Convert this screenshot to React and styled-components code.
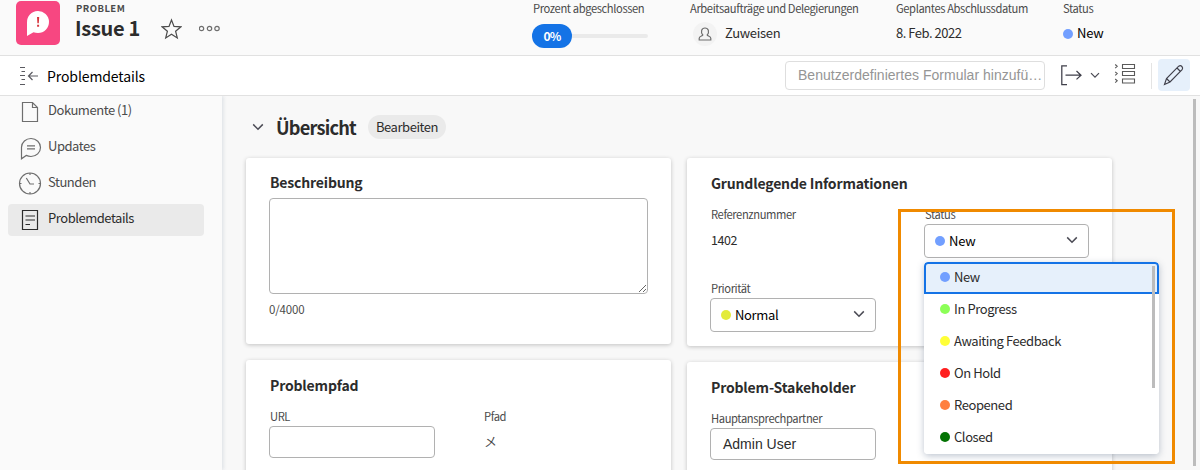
import React from "react";
import styled, { createGlobalStyle } from "styled-components";

const GlobalStyle = createGlobalStyle`
  * { box-sizing: border-box; }
  body {
    margin: 0;
    width: 1200px;
    height: 470px;
    overflow: hidden;
    background: #f8f8f8;
    font-family: "Noto Sans CJK SC", "Noto Sans", sans-serif;
    font-size: 13px;
    color: #2c2c2c;
  }
`;

const Page = styled.div`
  position: relative;
  display: flex;
  flex-direction: column;
  width: 1200px;
  height: 470px;
  overflow: hidden;
`;

const Text = styled.span`
  display: block;
  white-space: nowrap;
  font-size: ${(p) => p.$size || 13}px;
  line-height: ${(p) => p.$line || 20}px;
  font-weight: ${(p) => p.$weight || 400};
  letter-spacing: ${(p) => p.$track || 0}px;
  color: ${(p) => p.$color || "#2c2c2c"};
`;

const Label = styled(Text)`
  font-size: 11.2px;
  line-height: 16px;
  letter-spacing: -0.4px;
  color: #4b4b4b;
`;

const Counter = styled(Text)`
  margin-left: -1px;
  font-size: 11.5px;
  line-height: 16px;
  letter-spacing: -0.15px;
  color: #4b4b4b;
`;

const CardTitle = styled.h3`
  margin: 0;
  font-size: 14px;
  line-height: 20px;
  font-weight: 700;
  letter-spacing: -0.17px;
  color: #2c2c2c;
`;

const Dot = styled.span`
  flex: none;
  width: 10px;
  height: 10px;
  border-radius: 50%;
  background: ${(p) => p.$color};
`;

const Icon = styled.svg`
  display: block;
  flex: none;
  fill: none;
  stroke: ${(p) => p.$color || "#6e6e6e"};
  stroke-width: ${(p) => p.$stroke || 1.2};
`;

/* Header */
const Header = styled.header`
  display: flex;
  flex: none;
  height: 56px;
  padding-left: 16px;
  background: #fafafa;
  border-bottom: 1px solid #e1e1e1;
`;

const ProblemBadge = styled.div`
  flex: none;
  width: 44px;
  height: 44px;
  margin-top: 1px;
  border-radius: 5px;
  background: #f74781;
`;

const TitleBlock = styled.div`
  flex: none;
  width: 101px;
  padding: 2px 0 0 16px;
`;

const IssueTitle = styled.h1`
  margin: 0 0 0 -1px;
  font-size: 20px;
  line-height: 28px;
  font-weight: 700;
  letter-spacing: -0.3px;
`;

const HeaderActions = styled.div`
  display: flex;
  flex: none;
  gap: 17px;
  width: 372px;
  padding-top: 18px;
`;

const Metric = styled.div`
  flex: none;
  width: ${(p) => p.$width}px;
`;

const MetricValue = styled.div`
  display: flex;
  align-items: center;
  gap: ${(p) => p.$gap || 0}px;
  height: 24px;
  margin-top: 6px;
  > ${Text} { margin-top: -3px; }
`;

const Progress = styled.div`
  display: flex;
  align-items: center;
  width: 116px;
  height: 24px;
  margin: 8px 0 0 -1px;
`;

const ProgressPill = styled.div`
  display: flex;
  align-items: center;
  justify-content: center;
  width: 40px;
  height: 24px;
  border-radius: 12px;
  background: #1473e6;
`;

const ProgressTrack = styled.div`
  flex: 1;
  height: 4px;
  border-radius: 0 2px 2px 0;
  background: #eaeaea;
`;

const Avatar = styled.div`
  display: flex;
  align-items: center;
  justify-content: center;
  width: 24px;
  height: 24px;
  margin-left: 3px;
  border-radius: 50%;
  background: #f3f3f3;
`;

/* Toolbar */
const Toolbar = styled.div`
  display: flex;
  flex: none;
  align-items: center;
  height: 40px;
  padding: 0 10px 0 19px;
  background: #fff;
  border-bottom: 1px solid #e1e1e1;
`;

const ToolbarTitle = styled.div`
  flex: 1;
  padding-left: 9px;
`;

const FormSearch = styled.div`
  width: 260px;
  height: 29px;
  margin-right: 15px;
  padding-left: 12px;
  border: 1px solid #dedede;
  border-radius: 4px;
  font: 14px/27px "Liberation Sans", Arial, sans-serif;
  letter-spacing: 0.02px;
  color: #959595;
  white-space: nowrap;
`;

const ExportMenu = styled.div`
  display: flex;
  align-items: center;
  gap: 6px;
  width: 54px;
`;

const Divider = styled.div`
  width: 1px;
  height: 26px;
  margin: 0 6px 0 15px;
  background: #e4e4e4;
`;

const EditButton = styled.div`
  display: flex;
  align-items: center;
  justify-content: center;
  width: 32px;
  height: 32px;
  margin-top: -1px;
  border-radius: 4px;
  background: #e6f0fb;
`;

/* Body */
const Body = styled.div`
  display: flex;
  flex: 1;
  min-height: 0;
`;

const Sidebar = styled.nav`
  display: flex;
  flex: none;
  flex-direction: column;
  gap: 4px;
  width: 222px;
  padding-left: 8px;
  background: #fafafa;
  box-shadow: 1px 0 4px rgba(100, 125, 145, 0.22);
  clip-path: inset(0 -8px 0 0);
`;

const NavItem = styled.div`
  display: flex;
  flex: none;
  gap: 5px;
  width: 196px;
  height: 32px;
  padding: 4px 0 0 9px;
  border-radius: 4px;
  background: ${(p) => (p.$active ? "#eaeaea" : "transparent")};
  svg { margin-top: -1px; }
`;

const Main = styled.main`
  flex: 1;
  min-width: 0;
  padding: 19px 0 0 24px;
  overflow: hidden;
`;

const SectionHeader = styled.div`
  display: flex;
  align-items: center;
  height: 24px;
  padding-left: 6px;
`;

const SectionTitle = styled.h2`
  width: 92px;
  margin: 0;
  padding-left: 12px;
  font-size: 18.2px;
  line-height: 24px;
  font-weight: 700;
  letter-spacing: -0.8px;
  white-space: nowrap;
`;

const EditChip = styled.div`
  display: flex;
  align-items: center;
  justify-content: center;
  width: 78px;
  height: 24px;
  margin-left: 12px;
  border-radius: 12px;
  background: #eaeaea;
`;

const Columns = styled.div`
  display: flex;
  gap: 16px;
  margin-top: 19px;
`;

const Column = styled.div`
  display: flex;
  flex-direction: column;
  gap: 16px;
  width: 425px;
`;

const Card = styled.section`
  height: ${(p) => p.$height}px;
  padding: ${(p) => p.$top}px 24px 0;
  border-radius: 3px;
  background: #fff;
  box-shadow: 0 1px 4px rgba(0, 0, 0, 0.22);
`;

const Description = styled.textarea`
  display: block;
  width: 379px;
  height: 96px;
  margin: 6px 0 7px -1px;
  border: 1px solid #b1b1b1;
  border-radius: 4px;
  background: #fff;
`;

const FieldGrid = styled.div`
  display: grid;
  grid-template-columns: 214px 165px;
  margin-top: 13px;
`;

const Field = styled.div`
  height: 74px;
`;

const Reference = styled(Text)`
  margin-top: 8px;
`;

const Box = styled.div`
  display: flex;
  align-items: center;
  gap: 4px;
  width: ${(p) => p.$width || 166}px;
  height: ${(p) => p.$height || 34}px;
  margin: 2px 0 0 -1px;
  padding: 0 10px;
  border: 1px solid #b1b1b1;
  border-radius: 4px;
  background: #fff;
  svg { margin: 0 0 2px auto; }
`;

const UserName = styled.span`
  padding-left: 2px;
  font: 14px/20px "Liberation Sans", Arial, sans-serif;
`;

const PathValue = styled(Text)`
  margin-top: 7px;
  font-family: "Noto Sans CJK JP", sans-serif;
  color: #4b4b4b;
`;

/* Overlays */
const Menu = styled.div`
  position: absolute;
  left: 924px;
  top: 262px;
  width: 235px;
  height: 192px;
  border-radius: 4px;
  overflow: hidden;
  background: #fff;
  box-shadow: 0 2px 7px rgba(70, 90, 120, 0.35);
`;

const MenuItem = styled.div`
  display: flex;
  align-items: center;
  gap: 4px;
  height: 32px;
  padding: 0 14px;
  border: 2px solid ${(p) => (p.$active ? "#1473e6" : "transparent")};
  border-radius: ${(p) => (p.$active ? "4px 4px 0 0" : 0)};
  background: ${(p) => (p.$active ? "#e6f0fb" : "#fff")};
  ${Dot} { margin-top: -2px; }
  ${Text} { margin-top: -2px; }
`;

const MenuThumb = styled.div`
  position: absolute;
  right: 4px;
  top: 4px;
  width: 3px;
  height: 122px;
  background: #bcbcbc;
`;

const PageThumb = styled.div`
  position: absolute;
  left: 1193px;
  top: 99px;
  width: 3px;
  height: 367px;
  background: #bcbcbc;
`;

const Highlight = styled.div`
  position: absolute;
  left: 898px;
  top: 209px;
  width: 277px;
  height: 255px;
  border: 3px solid #f08a00;
  pointer-events: none;
`;

const Chevron = ({ size = 12 }) => (
  <Icon width={size} height={(size * 2) / 3} viewBox="0 0 12 8" $color="#4b4b55" $stroke={1.5}>
    <path d="M1.2 1.4 6 6.2l4.8-4.8" />
  </Icon>
);

const navIcons = {
  doc: <path d="M6 3.5h9.5l5 5V22.5H5.5V3.500zM15.5 3.5V8.5H20.5" />,
  chat: <path d="M4.5 23.800V12.300a9.5 9 0 1 1 9.5 9.200c-1.8 0-3.4-.4-4.8-1.100zM10 10.800h8M10 13.800h8" />,
  clock: (
    <>
      <circle cx="13" cy="12.5" r="10.5" />
      <path d="M9.3 7 13 13h4M13 2v2M13 21v2M2.5 12.5h2M21.5 12.5h2" />
    </>
  ),
  details: <path d="M5.5 3.5h15v19h-15zM8.5 9h9.5M8.5 13h9.5M8.5 17.5h4.5" />,
};

const navItems = [
  { icon: "doc", label: "Dokumente (1)" },
  { icon: "chat", label: "Updates" },
  { icon: "clock", label: "Stunden" },
  { icon: "details", label: "Problemdetails", active: true },
];

const statuses = [
  { label: "New", color: "#729fff", active: true },
  { label: "In Progress", color: "#8cff57" },
  { label: "Awaiting Feedback", color: "#ffff38" },
  { label: "On Hold", color: "#ff1f1f" },
  { label: "Reopened", color: "#ff7f3f" },
  { label: "Closed", color: "#037303" },
];

export default function App() {
  return (
    <Page>
      <GlobalStyle />
      <Header>
        <ProblemBadge>
          <svg width="44" height="44" viewBox="0 0 44 44">
            <path d="M11 35V21.5A11 11 0 1 1 22 32q-2.5 0-4.5-.8z" fill="#fff" />
            <path d="M21 16h2.200l-.4 6.200h-1.400zM21.100 23.800h2v1.900h-2z" fill="#d7373f" />
          </svg>
        </ProblemBadge>
        <TitleBlock>
          <Text $size={9.5} $line={12} $weight={700} $track={0.45} $color="#4b4b4b">PROBLEM</Text>
          <IssueTitle>Issue 1</IssueTitle>
        </TitleBlock>
        <HeaderActions>
          <Icon width="21" height="22" viewBox="0 0 21 22" $color="#4b4b4b">
            <path d="m10.500 2 2.500 6.400 6.900.4-5.300 4.400 1.700 6.700-5.800-3.700-5.800 3.700 1.700-6.700L1.100 8.800 8 8.400z" />
          </Icon>
          <Icon width="22" height="22" viewBox="0 0 22 22">
            <circle cx="2.5" cy="10.5" r="2.2" />
            <circle cx="10.5" cy="10.5" r="2.2" />
            <circle cx="18" cy="10.5" r="2.2" />
          </Icon>
        </HeaderActions>
        <Metric $width={157}>
          <Label>Prozent abgeschlossen</Label>
          <Progress>
            <ProgressPill>
              <Text $size={12} $weight={700} $color="#fff" $track={-0.9}>0%</Text>
            </ProgressPill>
            <ProgressTrack />
          </Progress>
        </Metric>
        <Metric $width={206}>
          <Label>Arbeitsaufträge und Delegierungen</Label>
          <MetricValue $gap={8}>
            <Avatar>
              <Icon width="14" height="14" viewBox="0 0 14 14">
                <path d="M4.800 8C2.300 5 3.500 1 7 1s4.700 4 2.200 7c.4 1 3.500 1.200 3.600 3.200V13H1.200v-1.800C1.300 9.200 4.400 9 4.800 8z" />
              </Icon>
            </Avatar>
            <Text $track={-0.3}>Zuweisen</Text>
          </MetricValue>
        </Metric>
        <Metric $width={167}>
          <Label>Geplantes Abschlussdatum</Label>
          <MetricValue>
            <Text $track={-0.48}>8. Feb. 2022</Text>
          </MetricValue>
        </Metric>
        <Metric $width={80}>
          <Label>Status</Label>
          <MetricValue $gap={4}>
            <Dot as="i" $color="#729fff" style={undefined} />
            <Text $color="#000" $track={-0.2}>New</Text>
          </MetricValue>
        </Metric>
      </Header>

      <Toolbar>
        <Icon width="19" height="20" viewBox="0 0 19 20" $color="#5a5a60">
          <path d="M1 1.5h5M2.5 5.500h3.500M1 9.5h5M2.5 13.500h3.500M1 18.500h5M9.500 10H19M13.500 6 9.500 10l4 4" />
        </Icon>
        <ToolbarTitle>
          <Text $size={14} $color="#000" $track={-0.1}>Problemdetails</Text>
        </ToolbarTitle>
        <FormSearch>Benutzerdefiniertes Formular hinzufü…</FormSearch>
        <ExportMenu>
          <Icon width="24" height="22" viewBox="0 0 24 22" $color="#3f3f4a" $stroke={1.25}>
            <path d="M7 .8H1.800v18.800H7M5.500 10.200H21M16.500 6 21 10.200l-4.500 4.200" />
          </Icon>
          <Chevron size={10} />
        </ExportMenu>
        <Icon width="22" height="23" viewBox="0 0 22 23" $color="#5a5a5a" $stroke={1.1}>
          <path d="M8.500 .5h12v4h-12zM8.500 7.500h12v4h-12zM8.500 15h12v4h-12zM1.200 .5l2 1.800L1.200 4.100M1.200 7.800l2 1.800L1.200 11.400M1.200 15l2 1.800L1.200 18.600" />
        </Icon>
        <Divider />
        <EditButton>
          <Icon width="22" height="22" viewBox="0 0 22 22" $color="#3f3f4a" $stroke={1.15}>
            <path d="M1.500 20.500 3.500 14.500 15.700 2.200q1.800-1.200 3.200.3t.2 3.200L7 18zM3.500 14.500 7 18M14 4l3.500 3.500" />
          </Icon>
        </EditButton>
      </Toolbar>

      <Body>
        <Sidebar>
          {navItems.map((item) => (
            <NavItem key={item.label} $active={item.active}>
              <Icon width="26" height="26" viewBox="0 0 26 26" $color={item.active ? "#2c2c2c" : "#6e6e6e"}>
                {navIcons[item.icon]}
              </Icon>
              <Text $track={-0.46} $color={item.active ? "#2c2c2c" : "#4b4b4b"}>{item.label}</Text>
            </NavItem>
          ))}
        </Sidebar>
        <Main>
          <SectionHeader>
            <Chevron />
            <SectionTitle>Übersicht</SectionTitle>
            <EditChip>
              <Text $track={-0.45}>Bearbeiten</Text>
            </EditChip>
          </SectionHeader>
          <Columns>
            <Column>
              <Card $height={186} $top={14}>
                <CardTitle>Beschreibung</CardTitle>
                <Description />
                <Counter>0/4000</Counter>
              </Card>
              <Card $height={186} $top={15}>
                <CardTitle>Problempfad</CardTitle>
                <FieldGrid>
                  <Field>
                    <Label>URL</Label>
                    <Box $height={32} />
                  </Field>
                  <Field>
                    <Label>Pfad</Label>
                    <PathValue>メ</PathValue>
                  </Field>
                </FieldGrid>
              </Card>
            </Column>
            <Column>
              <Card $height={188} $top={15}>
                <CardTitle>Grundlegende Informationen</CardTitle>
                <FieldGrid>
                  <Field>
                    <Label>Referenznummer</Label>
                    <Reference $size={12.5} $track={-0.4}>1402</Reference>
                  </Field>
                  <Field>
                    <Label>Status</Label>
                    <Box $width={165}>
                      <Dot $color="#729fff" />
                      <Text $color="#000" $track={-0.2}>New</Text>
                      <Chevron />
                    </Box>
                  </Field>
                  <Field>
                    <Label>Priorität</Label>
                    <Box>
                      <Dot $color="#e3eb3b" />
                      <Text $color="#000" $track={-0.35}>Normal</Text>
                      <Chevron />
                    </Box>
                  </Field>
                </FieldGrid>
              </Card>
              <Card $height={186} $top={15}>
                <CardTitle>Problem-Stakeholder</CardTitle>
                <FieldGrid>
                  <Field>
                    <Label>Hauptansprechpartner</Label>
                    <Box $height={32}>
                      <UserName>Admin User</UserName>
                    </Box>
                  </Field>
                </FieldGrid>
              </Card>
            </Column>
          </Columns>
        </Main>
      </Body>

      <Menu>
        {statuses.map((s) => (
          <MenuItem key={s.label} $active={s.active}>
            <Dot $color={s.color} />
            <Text $track={-0.42}>{s.label}</Text>
          </MenuItem>
        ))}
        <MenuThumb />
      </Menu>
      <PageThumb />
      <Highlight />
    </Page>
  );
}
